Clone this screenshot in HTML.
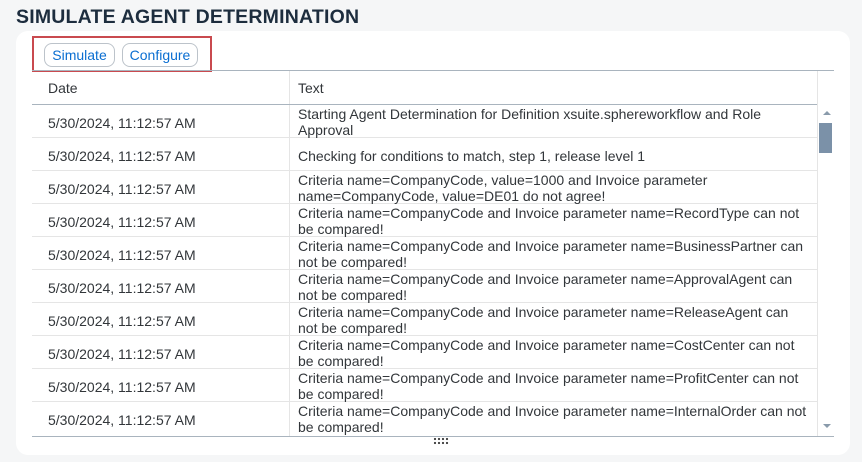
<!DOCTYPE html>
<html><head><style>
body{margin:0;width:862px;height:462px;background:#f5f6f7;font-family:"Liberation Sans",Arial,sans-serif;position:relative;overflow:hidden;color:#32363a}
.t{position:absolute;left:16px;top:6px;font-size:19.5px;font-weight:bold;color:#1d2d3e;letter-spacing:0.2px}
.card{position:absolute;left:16px;top:31px;width:834px;height:424px;background:#fff;border-radius:12px}
.red{position:absolute;left:32px;top:36px;width:176px;height:32px;border:2px solid #c94a4f}
.btn{position:absolute;top:43px;height:22px;border:1px solid #bcc3ca;border-radius:8px;color:#0a6ed1;font-size:14px;line-height:22px;text-align:center;background:#fff}
.tbl{position:absolute;left:32px;top:70px;width:802px;height:365px;border-top:1px solid #a9b4be;border-bottom:1px solid #a9b4be}
.row{position:absolute;left:0;width:785px;border-bottom:1px solid #e5e5e5;font-size:14px;line-height:16px}
.d{position:absolute;left:16px}
.x{position:absolute;left:266px;width:512px}
.vl{position:absolute;left:257px;top:0;width:1px;height:365px;background:#e5e5e5}
.sb{position:absolute;left:785px;top:0;width:1px;height:365px;background:#e5e5e5}
</style></head><body>
<div class="t">SIMULATE AGENT DETERMINATION</div>
<div class="card"></div>
<div class="red"></div>
<div class="btn" style="left:44px;width:69px">Simulate</div>
<div class="btn" style="left:122px;width:74px">Configure</div>
<div class="tbl">
<div class="vl"></div><div class="sb"></div>
<div class="row" style="top:0;height:33px;border-bottom-color:#a9b4be"><span class="d" style="top:9px">Date</span><span class="x" style="top:9px">Text</span></div>
<div class="row" style="top:34px;height:32px"><span class="d" style="top:10px">5/30/2024, 11:12:57 AM</span><span class="x" style="top:1px">Starting Agent Determination for Definition xsuite.sphereworkflow and Role Approval</span></div>
<div class="row" style="top:67px;height:32px"><span class="d" style="top:10px">5/30/2024, 11:12:57 AM</span><span class="x" style="top:10px">Checking for conditions to match, step 1, release level 1</span></div>
<div class="row" style="top:100px;height:32px"><span class="d" style="top:10px">5/30/2024, 11:12:57 AM</span><span class="x" style="top:1px">Criteria name=CompanyCode, value=1000 and Invoice parameter name=CompanyCode, value=DE01 do not agree!</span></div>
<div class="row" style="top:133px;height:32px"><span class="d" style="top:10px">5/30/2024, 11:12:57 AM</span><span class="x" style="top:1px">Criteria name=CompanyCode and Invoice parameter name=RecordType can not be compared!</span></div>
<div class="row" style="top:166px;height:32px"><span class="d" style="top:10px">5/30/2024, 11:12:57 AM</span><span class="x" style="top:1px">Criteria name=CompanyCode and Invoice parameter name=BusinessPartner can not be compared!</span></div>
<div class="row" style="top:199px;height:32px"><span class="d" style="top:10px">5/30/2024, 11:12:57 AM</span><span class="x" style="top:1px">Criteria name=CompanyCode and Invoice parameter name=ApprovalAgent can not be compared!</span></div>
<div class="row" style="top:232px;height:32px"><span class="d" style="top:10px">5/30/2024, 11:12:57 AM</span><span class="x" style="top:1px">Criteria name=CompanyCode and Invoice parameter name=ReleaseAgent can not be compared!</span></div>
<div class="row" style="top:265px;height:32px"><span class="d" style="top:10px">5/30/2024, 11:12:57 AM</span><span class="x" style="top:1px">Criteria name=CompanyCode and Invoice parameter name=CostCenter can not be compared!</span></div>
<div class="row" style="top:298px;height:32px"><span class="d" style="top:10px">5/30/2024, 11:12:57 AM</span><span class="x" style="top:1px">Criteria name=CompanyCode and Invoice parameter name=ProfitCenter can not be compared!</span></div>
<div class="row" style="top:331px;height:33px;border-bottom:none"><span class="d" style="top:10px">5/30/2024, 11:12:57 AM</span><span class="x" style="top:1px">Criteria name=CompanyCode and Invoice parameter name=InternalOrder can not be compared!</span></div>
<div style="position:absolute;left:791px;top:40px;width:0;height:0;border-left:4px solid transparent;border-right:4px solid transparent;border-bottom:4px solid #8a9bab"></div>
<div style="position:absolute;left:787px;top:52px;width:13px;height:30px;background:#7b91a8"></div>
<div style="position:absolute;left:791px;top:353px;width:0;height:0;border-left:4px solid transparent;border-right:4px solid transparent;border-top:4px solid #8a9bab"></div>
</div>
<div style="position:absolute;left:433px;top:437px;width:16px;height:8px;background-image:radial-gradient(circle,#444 1px,transparent 1.3px);background-size:4px 4px"></div>
</body></html>
